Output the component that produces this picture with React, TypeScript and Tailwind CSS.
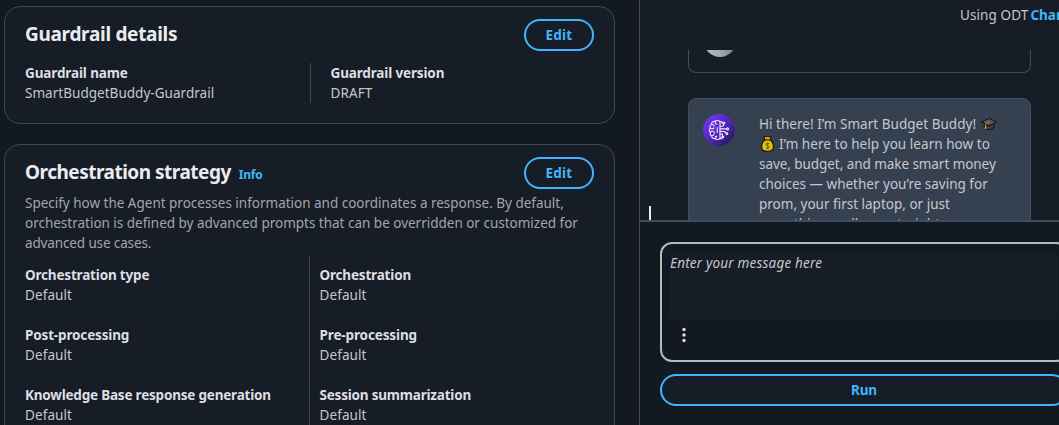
import type { ReactNode } from "react";

function EditButton() {
  return (
    <button className="h-8 w-[70px] rounded-full border-2 border-[#42b4ff] text-[13.5px] leading-7 font-bold tracking-[0.2px] text-[#42b4ff]">
      Edit
    </button>
  );
}

type FieldProps = { label: string; value: string; track: string; valueTrack?: string };

function Field({ label, value, track, valueTrack = "tracking-[0.1px]" }: FieldProps) {
  return (
    <div className="leading-5 whitespace-nowrap">
      <div className={`font-bold text-[#dedee3] ${track}`}>{label}</div>
      <div className={`text-[#c6c6cd] ${valueTrack}`}>{value}</div>
    </div>
  );
}

function Card({ className, children }: { className: string; children: ReactNode }) {
  return (
    <section className={`rounded-2xl border border-[#424650] bg-[#161d26] pt-3 pr-5 pl-5 ${className}`}>
      {children}
    </section>
  );
}

function AgentIcon() {
  return (
    <svg className="size-8 shrink-0" viewBox="0 0 32 32" fill="none">
      <defs>
        <linearGradient id="agent" x1="4" y1="4" x2="27" y2="28" gradientUnits="userSpaceOnUse">
          <stop stopColor="#7234f5" />
          <stop offset="0.5" stopColor="#5526bd" />
          <stop offset="1" stopColor="#2b1a68" />
        </linearGradient>
      </defs>
      <circle cx="16" cy="16" r="16" fill="url(#agent)" />
      <g stroke="#efe6ff" strokeWidth="1.1" strokeLinecap="round" strokeLinejoin="round">
        <path d="M17 8v16c-.6 1.700-3.300 2.100-4.700.6-2.100.5-3.800-.9-3.600-2.900-1.700-.5-1.800-2.200-1.200-3.300C6 17.600 6 15 7.400 14.200 6.600 12.600 7 11 8.600 10.500 8.300 8.300 10 6.900 12.200 7.400 13.500 5.900 16.300 6.300 17 8z" />
        <path d="M12.200 7.400c-.3 1.300.2 2.400 1.600 2.700M8.600 10.500c1.300-.2 2.300.4 2.600 1.700M7.400 14.200c1 .8 2.500.8 3.500-.2M7.500 18.400c.9-1.500 3.300-1.500 4 .3M8.700 21.700c1.300.1 2.200-.5 2.500-1.600M12.300 24.600c-.2-1.200.3-2.200 1.600-2.500M14.200 13.500v5" />
        <path d="M17 7.600c1.400-.5 2.300.2 2.300 1.500v.4M17 12.200h2.800l.9-1v-1M17 14.900h6.400M17 17.500h4.600l1.500 1.500M17 20h2.500v2M17 24.400c1.200.5 2.300 0 2.500-1.100" />
        <circle cx="20.900" cy="9.100" r="0.900" />
        <circle cx="24.600" cy="14.900" r="1" />
        <circle cx="23.900" cy="19.700" r="0.900" />
        <circle cx="19.800" cy="22.900" r="0.900" />
      </g>
    </svg>
  );
}

function GraduationCap() {
  return (
    <svg className="ml-[5px] inline-block h-4 w-4 align-[-3px]" viewBox="0 0 16 16">
      <path d="M3.300 7.500v4.200c1 2.300 8.200 2.300 9.500 0V7.500L8 9.800z" fill="#40403f" stroke="#141414" strokeWidth="1" />
      <path d="M.5 6 8 2.500 15.500 6 8 9.800z" fill="#575757" stroke="#111" strokeWidth="1" strokeLinejoin="round" />
      <path d="M8 6 4.500 7.700v4.500" fill="none" stroke="#c8912b" strokeWidth="0.900" />
      <path d="M4.500 10.800v2.200" stroke="#e0a52c" strokeWidth="1.500" />
    </svg>
  );
}

function MoneyBag() {
  return (
    <svg className="mr-[5px] ml-[2px] inline-block h-4 w-[13px] align-[-3px]" viewBox="0 0 13 16">
      <path d="M3 .7h7L9.200 4C11 5.300 12.400 8 12.400 11c0 3-1.700 4.300-5.900 4.300S.6 14 .6 11c0-3 1.400-5.700 3.200-7z" fill="#fdb900" stroke="#15130c" strokeWidth="1.100" strokeLinejoin="round" />
      <path d="M3.500 3.900h6" stroke="#15130c" strokeWidth="1.100" />
      <path d="M8.300 7.900c-.7-.8-3.300-.9-3.300.7 0 1.500 3.300.8 3.300 2.400 0 1.600-2.800 1.500-3.500.5M6.600 6.300v7" fill="none" stroke="#239036" strokeWidth="1.100" />
    </svg>
  );
}

const strategy = [
  { label: "Orchestration type", track: "tracking-[-0.18px]" },
  { label: "Orchestration", track: "tracking-[-0.18px]" },
  { label: "Post-processing", track: "tracking-[-0.15px]" },
  { label: "Pre-processing", track: "tracking-[-0.12px]" },
  { label: "Knowledge Base response generation", track: "tracking-[-0.2px]" },
  { label: "Session summarization", track: "tracking-[-0.2px]" },
];

function StrategyColumn({ start }: { start: number }) {
  return (
    <div className="flex flex-col gap-5">
      {strategy
        .filter((_, i) => i % 2 === start)
        .map((f) => (
          <Field key={f.label} label={f.label} value="Default" track={f.track} />
        ))}
    </div>
  );
}

export default function App() {
  return (
    <div className="flex h-[425px] w-[1059px] overflow-hidden bg-[#131920] font-['Noto_Sans','Liberation_Sans',sans-serif] text-[13.5px] text-[#c6c6cd]">
      <main className="flex w-[639px] shrink-0 flex-col gap-5 pt-1.5 pl-1">
        <Card className="h-[118px] w-[611px] shrink-0">
          <div className="flex items-start justify-between">
            <h2 className="pt-px text-[19px] leading-[28px] font-bold tracking-[-0.3px] text-[#ebebf0]">Guardrail details</h2>
            <EditButton />
          </div>
          <div className="mt-3 grid h-10 grid-cols-[285px_1fr]">
            <Field
              label="Guardrail name"
              value="SmartBudgetBuddy-Guardrail"
              track="tracking-[-0.12px]"
              valueTrack="tracking-[0.03px]"
            />
            <div className="border-l border-[#424650] pl-[19.5px]">
              <Field label="Guardrail version" value="DRAFT" track="tracking-[-0.14px]" />
            </div>
          </div>
        </Card>

        <Card className="h-[330px] w-[611px] shrink-0">
          <div className="flex items-start justify-between">
            <h2 className="flex items-baseline gap-2 pt-px text-[19px] leading-[28px] font-bold tracking-[-0.5px] text-[#ebebf0]">
              Orchestration strategy
              <a className="text-[12px] tracking-[-0.2px] text-[#42b4ff]">Info</a>
            </h2>
            <EditButton />
          </div>
          <p className="mt-1 leading-5 tracking-[-0.01px] whitespace-nowrap text-[#a4a4ad]">
            Specify how the Agent processes information and coordinates a response. By default,
            <br />
            orchestration is defined by advanced prompts that can be overridden or customized for
            <br />
            <span className="tracking-[-0.13px]">advanced use cases.</span>
          </p>
          <div className="mt-0.5 grid h-[200px] grid-cols-[284px_1fr]">
            <div className="pt-2.5">
              <StrategyColumn start={0} />
            </div>
            <div className="border-l border-[#424650] pt-2.5 pl-[9.5px]">
              <StrategyColumn start={1} />
            </div>
          </div>
        </Card>
      </main>

      <aside className="flex w-[450px] shrink-0 flex-col border-l border-[#424650]">
        <div className="flex h-[222px] shrink-0 flex-col border-b-2 border-[#414d5c] bg-[#161d26]">
          <div className="flex h-[50px] shrink-0 gap-[2px] pt-[5px] pl-[320px] leading-5 whitespace-nowrap">
            <span className="tracking-[0.1px]">Using ODT</span>
            <span className="font-bold text-[#42b4ff]">Change</span>
          </div>
          <div className="flex h-[170px] overflow-hidden">
            <div className="flex w-12 flex-col justify-end pl-[9px]">
              <div className="h-3.5 w-0.5 bg-[#ebebf0]" />
            </div>
            <div className="flex w-[343px] flex-col">
              <div className="flex h-[23px] shrink-0 flex-col justify-end overflow-hidden rounded-b-lg border border-t-0 border-[#424d5c] pb-[15px] pl-[15px]">
                <div className="size-8 shrink-0 rounded-full bg-linear-to-r from-[#b4bcc8] via-[#9fa8b5] to-[#777e89]" />
              </div>
              <div className="mt-[25px] flex h-[160px] shrink-0 gap-6 rounded-t-lg border border-[#424d5c] bg-[#354150] pt-[15px] pl-3.5">
                <AgentIcon />
                <div className="leading-5 whitespace-nowrap">
                  <div className="tracking-[0.03px]">Hi there! I’m Smart Budget Buddy!<GraduationCap /></div>
                  <div className="tracking-[0.05px]"><MoneyBag />I’m here to help you learn how to</div>
                  <div className="tracking-[-0.06px]">save, budget, and make smart money</div>
                  <div>choices — whether you’re saving for</div>
                  <div>prom, your first laptop, or just</div>
                  <div>something really great, right</div>
                </div>
              </div>
            </div>
          </div>
        </div>

        <div className="flex flex-col gap-3 pt-5 pl-5">
          <div className="h-[120px] w-[408px] rounded-xl border-2 border-[#b4bac4] p-2">
            <div className="h-[67px] w-[388px] rounded bg-[#161d26] leading-[22px] tracking-[0.19px] text-[#c6c6cd] italic">Enter your message here</div>
            <svg className="mt-2 ml-1.5 size-4" viewBox="0 0 16 16" fill="#dedee3">
              <circle cx="8" cy="2.500" r="1.700" />
              <circle cx="8" cy="8" r="1.700" />
              <circle cx="8" cy="13.500" r="1.700" />
            </svg>
          </div>
          <button className="h-8 w-[408px] rounded-full border-2 border-[#42b4ff] bg-[#161d26] leading-7 font-bold tracking-[-0.1px] text-[#42b4ff]">Run</button>
        </div>
      </aside>
    </div>
  );
}
